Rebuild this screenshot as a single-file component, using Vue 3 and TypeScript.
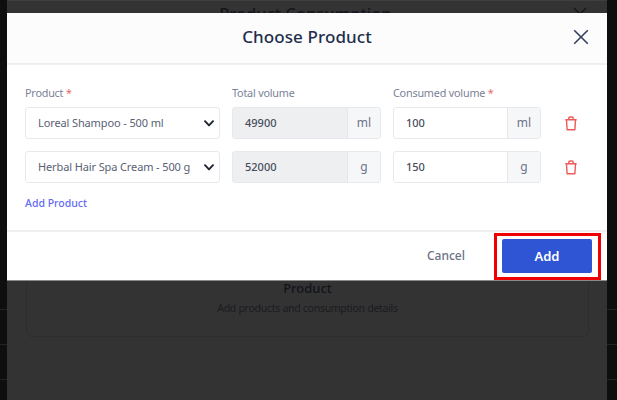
<script setup lang="ts">
interface Row { product: string; total: string; consumed: string; unit: string }
const rows: Row[] = [
  { product: 'Loreal Shampoo - 500 ml', total: '49900', consumed: '100', unit: 'ml' },
  { product: 'Herbal Hair Spa Cream - 500 g', total: '52000', consumed: '150', unit: 'g' },
]
</script>

<template>
  <div class="screen">
    <div class="strip left"><i></i><i></i><i></i></div>
    <main class="page">
      <div class="page-head">
        <span class="page-title">Product Consumption</span>
        <svg class="page-x" width="16" height="16" viewBox="0 0 16 16"><path d="M2 2l12 12M14 2L2 14" stroke="#14161c" stroke-width="1.5" fill="none" /></svg>
      </div>
      <div class="card">
        <div class="card-title">Product</div>
        <div class="card-sub">Add products and consumption details</div>
      </div>
    </main>
    <div class="strip right"><i></i><i></i><i></i></div>

    <section class="modal">
      <header class="modal-head">
        <h2>Choose Product</h2>
        <button class="close" aria-label="Close">
          <svg width="16" height="16" viewBox="0 0 16 16"><path d="M1.2 1.2l13.6 13.6M14.8 1.2L1.2 14.8" stroke="#33415c" stroke-width="1.6" fill="none" /></svg>
        </button>
      </header>
      <div class="modal-body">
        <div class="grid labels">
          <label>Product <em>*</em></label>
          <label>Total volume</label>
          <label>Consumed volume <em>*</em></label>
        </div>
        <div v-for="row in rows" :key="row.product" class="grid row">
          <div class="field select">
            <span class="sel-text">{{ row.product }}</span>
            <svg class="chev" width="10" height="7" viewBox="0 0 10 7"><path d="M1 1.200L5 5.400l4-4.200" stroke="#1e2430" stroke-width="1.900" fill="none" stroke-linecap="round" stroke-linejoin="round" /></svg>
          </div>
          <div class="field group disabled">
            <span class="val">{{ row.total }}</span>
            <span class="unit">{{ row.unit }}</span>
          </div>
          <div class="field group">
            <span class="val">{{ row.consumed }}</span>
            <span class="unit">{{ row.unit }}</span>
          </div>
          <svg class="trash" width="14" height="15" viewBox="0 0 14 15"><path d="M1.300 3.800h11.400M2.500 3.800l.6 10h7.800l.6-10M4.800 3.600V2.200C4.800 1.500 5.400 1 6 1h2c.6 0 1.200.5 1.200 1.200v1.400" stroke="#ee5a5a" stroke-width="1.400" fill="none" stroke-linejoin="round" /></svg>
        </div>
        <a class="add-link">Add Product</a>
      </div>
      <footer class="modal-foot">
        <span class="cancel">Cancel</span>
        <div class="highlight"><button class="add">Add</button></div>
      </footer>
    </section>
  </div>
</template>

<style scoped>
.screen {
  position: relative;
  width: 617px;
  height: 400px;
  display: flex;
  overflow: hidden;
  font-family: "Noto Sans", "Open Sans", sans-serif;
  background: #333;
}
.strip {
  background: #0e0e0e;
  display: flex;
  flex-direction: column;
  padding-top: 309px;
  gap: 34px;
}
.strip.left { width: 7px; }
.strip.right { width: 10px; }
.strip i { display: block; height: 1px; background: #232323; }
.page { width: 600px; display: flex; flex-direction: column; border-top: 1px solid #3f3f3f; }
.page-head {
  height: 35px;
  position: relative;
  display: flex;
  justify-content: center;
  color: #14161c;
}
.page-title { font-size: 16.500px; font-weight: 500; margin-top: 1px; margin-right: 3px; }
.page-x { position: absolute; right: 19px; top: 5px; }
.card {
  margin: 0 18px 0 19px;
  height: 301px;
  border: 1px solid #2d2d2d;
  border-radius: 6px;
  display: flex;
  flex-direction: column;
  align-items: center;
  justify-content: flex-end;
  padding-bottom: 18px;
  box-sizing: border-box;
}
.card-title { font-size: 13px; font-weight: 500; color: #12141a; line-height: 20px; }
.card-sub { font-size: 10.500px; letter-spacing: -0.28px; color: #1a1b1f; line-height: 20px; }

.modal {
  position: absolute;
  left: 7px;
  top: 13px;
  width: 600px;
  height: 268px;
  background: #fff;
  display: flex;
  flex-direction: column;
  border-bottom: 1px solid #8a8a8a;
  box-sizing: border-box;
}
.modal-head {
  height: 52px;
  background: #fcfcfc;
  border-bottom: 2px solid #efefef;
  box-sizing: border-box;
  display: flex;
  align-items: center;
  justify-content: center;
  position: relative;
  padding-bottom: 3px;
}
.modal-head h2 {
  margin: 0;
  font-size: 17px;
  font-weight: 500;
  color: #1f2e4d;
  letter-spacing: 0.1px;
}
.close {
  position: absolute;
  right: 18px;
  top: 16px;
  padding: 0;
  border: 0;
  background: none;
  line-height: 0;
}
.modal-body { flex: 1; padding: 20px 0 0 18px; }
.grid {
  display: grid;
  grid-template-columns: 195px 149px 148px 14px;
  column-gap: 12px;
}
.grid.labels label {
  font-size: 10.800px;
  letter-spacing: -0.2px;
  line-height: 16px;
  color: #7b8296;
}
.labels { height: 22px; }
label em { color: #e46a6a; font-style: normal; }
.row { height: 32px; margin-bottom: 12px; align-items: center; column-gap: 12px; }
.field {
  height: 32px;
  box-sizing: border-box;
  border: 1px solid #e7e9ed;
  border-radius: 3px;
  display: flex;
  align-items: center;
  font-size: 11px;
  color: #5a6174;
  background: #fff;
}
.select { padding: 0 5px 2px 12px; justify-content: space-between; }
.sel-text { white-space: nowrap; letter-spacing: -0.12px; }
.chev { flex: none; margin-top: 2px; }
.group { overflow: hidden; }
.val { flex: 1; padding: 0 0 2px 12px; font-size: 11px; font-weight: 500; color: #474d5c; }
.disabled { background: #eeeff1; }
.unit {
  width: 33px;
  height: 100%;
  background: #f6f7f9;
  border-left: 1px solid #e4e6ea;
  display: flex;
  align-items: center;
  justify-content: center;
  color: #6c7385;
  font-size: 12px;
  padding-bottom: 2px;
  box-sizing: border-box;
}
.trash { margin-left: 11px; margin-top: 1px; }
.add-link {
  display: block;
  font-size: 10.500px;
  font-weight: 500;
  line-height: 16px;
  color: #636bf5;
  margin-top: 0;
}
.modal-foot {
  height: 50px;
  border-top: 2px solid #efefef;
  box-sizing: border-box;
  display: flex;
  align-items: center;
  justify-content: flex-end;
  position: relative;
  padding-right: 142px;
  padding-bottom: 2px;
}
.cancel { font-size: 12px; font-weight: 500; color: #6a7285; }
.highlight {
  position: absolute;
  left: 487px;
  top: 1px;
  width: 107px;
  height: 47px;
  border: 3px solid #f00000;
  box-sizing: border-box;
  padding: 3px 5px;
}
.add {
  display: block;
  width: 90px;
  height: 34px;
  padding: 0;
  border: 0;
  border-radius: 2px;
  background: #2f55d4;
  color: #fff;
  font-family: inherit;
  font-size: 13px;
  font-weight: 600;
}
</style>
